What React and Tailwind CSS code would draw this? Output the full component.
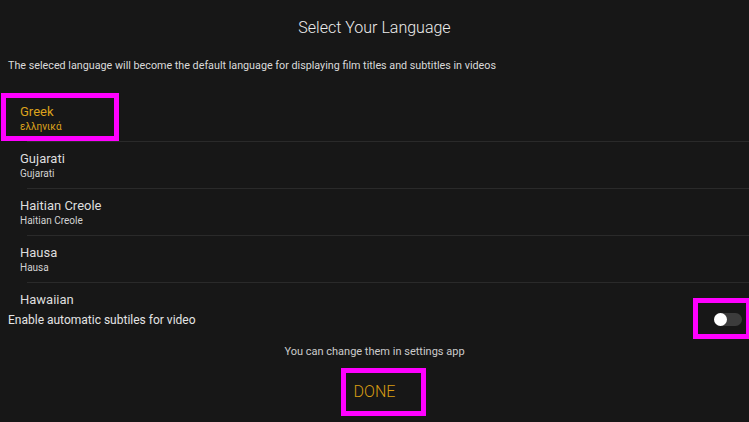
import React, { useState } from 'react';

const languages = [
    { name: 'Greek', native: 'ελληνικά' },
    { name: 'Gujarati', native: 'Gujarati' },
    { name: 'Haitian Creole', native: 'Haitian Creole' },
    { name: 'Hausa', native: 'Hausa' },
    { name: 'Hawaiian', native: 'Hawaiian' },
];

const LanguageRow = ({ lang, selected, onSelect }) => (
    <div>
        <button
            onClick={() => onSelect(lang.name)}
            className="block w-full text-left pt-[9px] pb-[8px]"
        >
            <div className={`pl-[20px] text-[13px] leading-[16px] ${selected ? 'text-[#dca21c]' : 'text-[#dedede]'}`}>
                {lang.name}
            </div>
            <div className={`pl-[20px] text-[10px] leading-[13px] ${selected ? 'text-[#dca21c]' : 'text-[#d2d2d2]'}`}>
                {lang.native}
            </div>
        </button>
        <div className="ml-[27px] h-px bg-[#2a2a2a]" />
    </div>
);

const App = () => {
    const [selected, setSelected] = useState('Greek');
    const [autoSubs, setAutoSubs] = useState(false);

    return (
        <div
            className="relative w-[749px] h-[422px] overflow-hidden bg-[#171717] flex flex-col"
            style={{ fontFamily: 'Roboto, "Noto Sans", sans-serif' }}
        >
            {/* Header */}
            <h1 className="pt-[18px] text-center text-[16px] leading-[20px] font-light text-[#ececec]">
                Select Your Language
            </h1>
            <p className="mt-[21px] px-[8px] text-[10.75px] leading-[14px] text-[#dadada]">
                The seleced language will become the default language for displaying film titles and subtitles in videos
            </p>

            {/* Language list */}
            <div className="mt-[22px] h-[214px] overflow-hidden">
                {languages.map((lang) => (
                    <LanguageRow
                        key={lang.name}
                        lang={lang}
                        selected={selected === lang.name}
                        onSelect={setSelected}
                    />
                ))}
            </div>

            {/* Auto subtitles */}
            <div className="mt-[2px] flex items-center justify-between pl-[8px] pr-[7px] h-[18px]">
                <span className="text-[12px] leading-[15px] text-[#e4e4e4]">
                    Enable automatic subtiles for video
                </span>
                <button
                    onClick={() => setAutoSubs(!autoSubs)}
                    className={`relative mb-[2px] w-[28px] h-[13px] rounded-full ${autoSubs ? 'bg-[#7a5a10]' : 'bg-[#3c3c3c]'}`}
                >
                    <span
                        className={`absolute top-0 w-[13px] h-[13px] rounded-full bg-white ${autoSubs ? 'left-[15px]' : 'left-0'}`}
                    />
                </button>
            </div>

            <p className="mt-[16px] text-center text-[11px] leading-[14px] text-[#cccccc]">
                You can change them in settings app
            </p>

            <div className="mt-[23px] flex justify-center">
                <button className="text-[16px] leading-[20px] font-light text-[#d99c12]">DONE</button>
            </div>

            {/* Annotation boxes */}
            <div className="absolute left-[1px] top-[93px] w-[118px] h-[48px] border-[5px] border-[#ff00ff]" />
            <div className="absolute left-[693px] top-[298px] w-[58px] h-[41px] border-[5px] border-[#ff00ff]" />
            <div className="absolute left-[341px] top-[368px] w-[85px] h-[48px] border-[5px] border-[#ff00ff]" />
        </div>
    );
};

export default App;
